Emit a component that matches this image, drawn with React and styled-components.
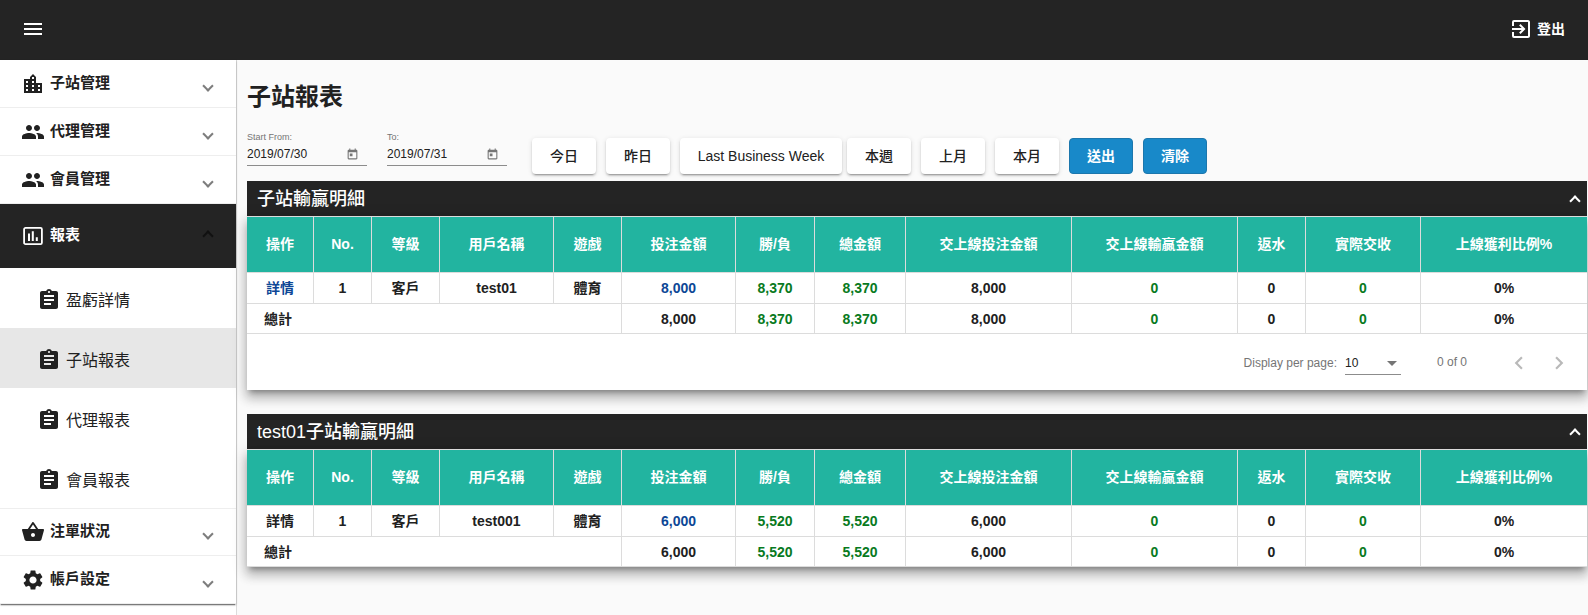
import React from "react";
import styled, { createGlobalStyle, css } from "styled-components";
import {
  MdMenu,
  MdExitToApp,
  MdLocationCity,
  MdPeople,
  MdAssignment,
  MdShoppingBasket,
  MdSettings,
  MdToday,
  MdChevronLeft,
  MdChevronRight,
  MdArrowDropDown,
} from "react-icons/md";

const ink = "#212121";
const dark = "#242424";
const muted = "#757575";
const line = "#dcdcdc";
const teal = "#22b4a0";
const blue = "#0d4796";
const green = "#087a1e";

const GlobalStyle = createGlobalStyle`
  *, *::before, *::after { box-sizing: border-box; }
  body {
    margin: 0;
    background: #fafafa;
    color: ${ink};
    font-family: "Liberation Sans", "Noto Sans CJK TC", sans-serif;
    font-size: 14px;
  }
  button, input, select { font: inherit; color: inherit; }
  button { border: 0; padding: 0; background: none; cursor: pointer; }
  a { color: inherit; text-decoration: none; }
  svg { display: block; flex: none; }
`;

const Page = styled.div`
  display: flex;
  flex-direction: column;
  min-height: 100vh;
`;

const TopBar = styled.header`
  display: flex;
  align-items: center;
  justify-content: space-between;
  height: 60px;
  padding: 0 23px 2px 21px;
  background: ${dark};
  color: #fff;
`;

const TopButton = styled.button`
  display: flex;
  align-items: center;
  gap: 4px;
  font-weight: 700;
  line-height: 20px;
`;

const Body = styled.div`
  flex: 1;
  display: flex;
`;

const Sidebar = styled.nav`
  flex: none;
  width: 237px;
  background: #fff;
  border-right: 1px solid ${line};
`;

const Menu = styled.div`
  box-shadow: 0 2px 1px -1px rgba(0, 0, 0, 0.4), 0 1px 2px rgba(0, 0, 0, 0.3);
`;

const SubMenu = styled.div`
  border-bottom: 1px solid #eeeeee;
  margin-bottom: -1px;
`;

const Chevron = styled.span`
  flex: none;
  width: 8px;
  height: 8px;
  border: solid currentColor;
  border-width: 0 2px 2px 0;
  ${({ $up }) =>
    $up
      ? css`
          transform: rotate(225deg);
        `
      : css`
          margin-top: 4px;
          transform: rotate(45deg);
        `}
`;

const Group = styled.button`
  display: flex;
  align-items: center;
  gap: 5px;
  width: 100%;
  height: ${({ $open }) => ($open ? 64 : 48)}px;
  padding: 0 24px 0 21px;
  border-bottom: ${({ $open }) => ($open ? 0 : 1)}px solid #eeeeee;
  background: ${({ $open }) => ($open ? dark : "transparent")};
  color: ${({ $open }) => ($open ? "#fff" : ink)};
  font-size: 15px;
  font-weight: 700;
  text-align: left;

  ${Chevron} {
    margin-left: auto;
    color: ${({ $open }) => ($open ? "#111" : "#7d7d7d")};
  }
`;

const GroupLabel = styled.span`
  padding-bottom: 2px;
  line-height: 22px;
`;

const SubLink = styled.a`
  display: flex;
  align-items: center;
  gap: 5px;
  height: 60px;
  padding: 4px 16px 0 37px;
  background: ${({ $active }) => ($active ? "#e7e7e7" : "#fff")};
  font-size: 16px;
  line-height: 24px;
`;

const SubLabel = styled.span`
  padding-top: 2px;
`;

const Main = styled.main`
  flex: 1;
  min-width: 0;
  padding: 19px 1px 24px 10px;
`;

const Title = styled.h1`
  margin: 0;
  font-size: 24px;
  font-weight: 700;
  line-height: 36px;
`;

const Filters = styled.form`
  display: flex;
  align-items: flex-end;
  padding: 16px 0 7px;
`;

const DateField = styled.div`
  width: 120px;
  height: 35px;
  margin: 0 20px 8px 0;
  border-bottom: 1px solid #8c8c8c;
`;

const DateLabel = styled.label`
  display: block;
  color: ${muted};
  font-size: 9px;
  line-height: 12px;
`;

const DateRow = styled.div`
  display: flex;
  align-items: center;
  padding: 1px 8px 0 0;
  color: ${muted};
`;

const DateInput = styled.input`
  flex: 1;
  min-width: 0;
  height: 20px;
  padding: 0;
  border: 0;
  outline: 0;
  background: none;
  color: ${ink};
  font-size: 12px;
`;

const Buttons = styled.div`
  display: flex;
  gap: 10px;
  margin-left: 5px;
`;

const Button = styled.button`
  min-width: ${({ $wide }) => ($wide ? 162 : 64)}px;
  height: 36px;
  padding: 0 16px;
  border-radius: 4px;
  background: ${({ $primary }) => ($primary ? "#1889c9" : "#fff")};
  color: ${({ $primary }) => ($primary ? "#fff" : ink)};
  font-weight: ${({ $primary }) => ($primary ? 700 : 500)};
  line-height: 34px;
  white-space: nowrap;
  ${({ $primary }) =>
    $primary
      ? css`
          border: 1px solid #1c77ad;
        `
      : css`
          box-shadow: 0 3px 1px -2px rgba(0, 0, 0, 0.2),
            0 2px 2px 0 rgba(0, 0, 0, 0.14), 0 1px 5px 0 rgba(0, 0, 0, 0.12);
        `}
`;

const Panel = styled.section`
  & + & {
    margin-top: 24px;
  }
`;

const PanelHead = styled.button`
  display: flex;
  align-items: center;
  justify-content: space-between;
  width: 100%;
  height: 35px;
  padding: 0 8px 0 10px;
  background: ${dark};
  color: #fff;
  font-size: 18px;
  font-weight: 500;
  line-height: 26px;

  ${Chevron} {
    margin-top: 4px;
  }
`;

const PanelBody = styled.div`
  background: #fff;
  box-shadow: 0 5px 5px -3px rgba(0, 0, 0, 0.3),
    0 8px 10px 1px rgba(0, 0, 0, 0.2), 0 3px 14px 2px rgba(0, 0, 0, 0.12);
`;

const Table = styled.table`
  width: 100%;
  table-layout: fixed;
  border-collapse: separate;
  border-spacing: 0;
  font-weight: 700;
  text-align: center;
`;

const Col = styled.col`
  width: ${({ $w }) => $w}px;
`;

const HeadCell = styled.th`
  height: 57px;
  padding: 0 0 2px;
  border: 1px solid ${line};
  border-left: 0;
  background: ${teal};
  color: #fff;
  line-height: 20px;

  &:last-child {
    border-right: 0;
  }
`;

const Cell = styled.td`
  height: ${({ $total }) => ($total ? 30 : 31)}px;
  padding: 0;
  border: solid ${line};
  border-width: 0 1px 1px 0;
  line-height: 20px;
  color: ${({ $tone }) =>
    $tone === "blue" ? blue : $tone === "green" ? green : ink};

  &:last-child {
    border-right: 0;
  }
`;

const TotalLabel = styled(Cell)`
  padding-left: 17px;
  text-align: left;
`;

const Pager = styled.div`
  display: flex;
  align-items: center;
  justify-content: flex-end;
  height: 56px;
  padding: 2px 8px 0 0;
  color: ${muted};
  font-size: 12px;
`;

const SelectBox = styled.span`
  display: flex;
  align-items: center;
  width: 56px;
  height: 24px;
  margin: 0 36px 0 8px;
  border-bottom: 1px solid #8c8c8c;

  svg {
    margin: 0 -3px 0 -21px;
    pointer-events: none;
  }
`;

const Select = styled.select`
  width: 100%;
  padding: 0;
  border: 0;
  outline: 0;
  background: none;
  appearance: none;
  color: ${ink};
`;

const Range = styled.span`
  margin-right: 32px;
  padding-bottom: 2px;
`;

const PageButton = styled.button`
  display: flex;
  justify-content: center;
  width: 40px;
  color: #b9b9b9;
`;

function ReportIcon({ size }) {
  return (
    <svg width={size} height={size} viewBox="0 0 24 24" aria-hidden="true">
      <rect x="3.1" y="3.9" width="17.8" height="16.2" rx="1.4" fill="none" stroke="currentColor" strokeWidth="1.8" />
      <path d="M7 9.6h2V17H7zM10.8 7.3h2V17h-2zM14.8 13.3h2V17h-2z" fill="currentColor" />
    </svg>
  );
}

const groupsAbove = [
  { label: "子站管理", Icon: MdLocationCity },
  { label: "代理管理", Icon: MdPeople },
  { label: "會員管理", Icon: MdPeople },
];
const groupsBelow = [
  { label: "注單狀況", Icon: MdShoppingBasket },
  { label: "帳戶設定", Icon: MdSettings },
];
const reports = ["盈虧詳情", "子站報表", "代理報表", "會員報表"];

const columns = [
  ["操作", 67],
  ["No.", 58],
  ["等級", 68],
  ["用戶名稱", 114],
  ["遊戲", 68],
  ["投注金額", 114],
  ["勝/負", 79],
  ["總金額", 91],
  ["交上線投注金額", 166],
  ["交上線輸贏金額", 166],
  ["返水", 68],
  ["實際交收", 115],
  ["上線獲利比例%", 166],
];

function MenuGroup({ label, Icon, open }) {
  return (
    <Group type="button" $open={open} aria-expanded={!!open}>
      <Icon size={24} />
      <GroupLabel>{label}</GroupLabel>
      <Chevron $up={open} />
    </Group>
  );
}

function DatePicker({ id, label, value }) {
  return (
    <DateField>
      <DateLabel htmlFor={id}>{label}</DateLabel>
      <DateRow>
        <DateInput id={id} type="text" defaultValue={value} />
        <button type="button" aria-label={`${label} calendar`}>
          <MdToday size={13} />
        </button>
      </DateRow>
    </DateField>
  );
}

function Figures({ bet, won, total, blueBet }) {
  return (
    <>
      <Cell $total={total} $tone={blueBet ? "blue" : undefined}>
        {blueBet ? <a href="#bets">{bet}</a> : bet}
      </Cell>
      <Cell $total={total} $tone="green">{won}</Cell>
      <Cell $total={total} $tone="green">{won}</Cell>
      <Cell $total={total}>{bet}</Cell>
      <Cell $total={total} $tone="green">0</Cell>
      <Cell $total={total}>0</Cell>
      <Cell $total={total} $tone="green">0</Cell>
      <Cell $total={total}>0%</Cell>
    </>
  );
}

function Report({ title, user, bet, won, linked, children }) {
  return (
    <Panel>
      <PanelHead type="button" aria-expanded="true">
        {title}
        <Chevron $up />
      </PanelHead>
      <PanelBody>
        <Table>
          <colgroup>
            {columns.map(([name, w]) => (
              <Col key={name} $w={w} />
            ))}
          </colgroup>
          <thead>
            <tr>
              {columns.map(([name]) => (
                <HeadCell key={name} scope="col">{name}</HeadCell>
              ))}
            </tr>
          </thead>
          <tbody>
            <tr>
              <Cell $tone={linked ? "blue" : undefined}>
                <a href="#details">詳情</a>
              </Cell>
              <Cell>1</Cell>
              <Cell>客戶</Cell>
              <Cell>{user}</Cell>
              <Cell>體育</Cell>
              <Figures bet={bet} won={won} blueBet />
            </tr>
            <tr>
              <TotalLabel $total colSpan={5}>總計</TotalLabel>
              <Figures bet={bet} won={won} total />
            </tr>
          </tbody>
        </Table>
        {children}
      </PanelBody>
    </Panel>
  );
}

export default function App() {
  return (
    <Page>
      <GlobalStyle />
      <TopBar>
        <TopButton type="button" aria-label="Menu">
          <MdMenu size={24} />
        </TopButton>
        <TopButton type="button">
          <MdExitToApp size={24} />
          登出
        </TopButton>
      </TopBar>
      <Body>
        <Sidebar>
          <Menu>
            {groupsAbove.map((g) => (
              <MenuGroup key={g.label} {...g} />
            ))}
            <MenuGroup label="報表" Icon={ReportIcon} open />
            <SubMenu>
              {reports.map((name) => (
                <SubLink key={name} href={`#${name}`} $active={name === "子站報表"}>
                  <MdAssignment size={24} />
                  <SubLabel>{name}</SubLabel>
                </SubLink>
              ))}
            </SubMenu>
            {groupsBelow.map((g) => (
              <MenuGroup key={g.label} {...g} />
            ))}
          </Menu>
        </Sidebar>
        <Main>
          <Title>子站報表</Title>
          <Filters>
            <DatePicker id="from" label="Start From:" value="2019/07/30" />
            <DatePicker id="to" label="To:" value="2019/07/31" />
            <Buttons>
              <Button type="button">今日</Button>
              <Button type="button">昨日</Button>
              <Button type="button" $wide>Last Business Week</Button>
            </Buttons>
            <Buttons>
              <Button type="button">本週</Button>
              <Button type="button">上月</Button>
              <Button type="button">本月</Button>
              <Button type="submit" $primary>送出</Button>
              <Button type="reset" $primary>清除</Button>
            </Buttons>
          </Filters>
          <Report title="子站輸贏明細" user="test01" bet="8,000" won="8,370" linked>
            <Pager>
              <label htmlFor="page-size">Display per page:</label>
              <SelectBox>
                <Select id="page-size" defaultValue="10">
                  <option>10</option>
                  <option>20</option>
                  <option>50</option>
                </Select>
                <MdArrowDropDown size={24} />
              </SelectBox>
              <Range>0 of 0</Range>
              <PageButton type="button" aria-label="Previous page">
                <MdChevronLeft size={26} />
              </PageButton>
              <PageButton type="button" aria-label="Next page">
                <MdChevronRight size={26} />
              </PageButton>
            </Pager>
          </Report>
          <Report title="test01子站輸贏明細" user="test001" bet="6,000" won="5,520" />
        </Main>
      </Body>
    </Page>
  );
}
